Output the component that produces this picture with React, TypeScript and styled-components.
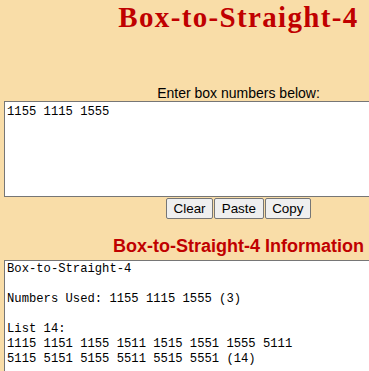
import React, { useState } from 'react';
import styled, { createGlobalStyle } from 'styled-components';

const GlobalStyle = createGlobalStyle`
  html, body {
    margin: 0;
    padding: 0;
    overflow: hidden;
    background: #f9dda8;
  }
`;

const RESULT = `Box-to-Straight-4

Numbers Used: 1155 1115 1555 (3)

List 14:
1115 1151 1155 1511 1515 1551 1555 5111
5115 5151 5155 5511 5515 5551 (14)`;

const App: React.FC = () => {
  const [numbers, setNumbers] = useState('1155 1115 1555');

  return (
    <>
      <GlobalStyle />
      <Column>
        <Title>Box-to-Straight-4</Title>
        <Label>Enter box numbers below:</Label>
        <Input
          value={numbers}
          spellCheck={false}
          onChange={e => setNumbers(e.target.value)}
        />
        <Buttons>
          <Button onClick={() => setNumbers('')}>Clear</Button>
          <Button>Paste</Button>
          <Button>Copy</Button>
        </Buttons>
        <InfoTitle>Box-to-Straight-4 Information</InfoTitle>
        <Output>{RESULT}</Output>
      </Column>
    </>
  );
};

const Column = styled.div`
  width: 469px;
  margin-left: 4px;
  display: flex;
  flex-direction: column;
  align-items: center;
  text-align: center;
`;

const Title = styled.h1`
  margin: 0;
  padding-top: 1px;
  font-family: 'Liberation Serif', 'Times New Roman', serif;
  font-weight: bold;
  font-size: 29px;
  line-height: 32px;
  letter-spacing: 1.35px;
  color: #c00000;
`;

const Label = styled.div`
  margin-top: 52px;
  font-family: 'Liberation Sans', Arial, sans-serif;
  font-size: 14px;
  line-height: 16px;
  color: #000;
`;

const Input = styled.textarea`
  display: block;
  box-sizing: border-box;
  width: 100%;
  height: 96px;
  margin: 0;
  padding: 3px 2px;
  border: 1px solid #767676;
  background: #fff;
  resize: none;
  outline: none;
  font-family: 'Liberation Mono', 'Courier New', monospace;
  font-size: 12.2px;
  line-height: 15px;
  color: #000;
`;

const Buttons = styled.div`
  display: flex;
  gap: 1px;
  margin-top: 1px;
`;

const Button = styled.button`
  box-sizing: border-box;
  height: 21px;
  margin: 0;
  padding: 0 6.6px;
  border: 1px solid #767676;
  border-radius: 2px;
  background: #efefef;
  font-family: 'Liberation Sans', Arial, sans-serif;
  font-size: 13.4px;
  color: #000;
`;

const InfoTitle = styled.h2`
  margin: 17px 0 0;
  font-family: 'Liberation Sans', Arial, sans-serif;
  font-weight: bold;
  font-size: 18px;
  line-height: 21px;
  color: #c00000;
`;

const Output = styled.div`
  box-sizing: border-box;
  width: 100%;
  height: 140px;
  margin-top: 3px;
  padding: 1px 2px;
  border: 1px solid #767676;
  background: #fff;
  text-align: left;
  white-space: pre;
  font-family: 'Liberation Mono', 'Courier New', monospace;
  font-size: 12.2px;
  line-height: 15px;
  color: #000;
`;

export default App;
